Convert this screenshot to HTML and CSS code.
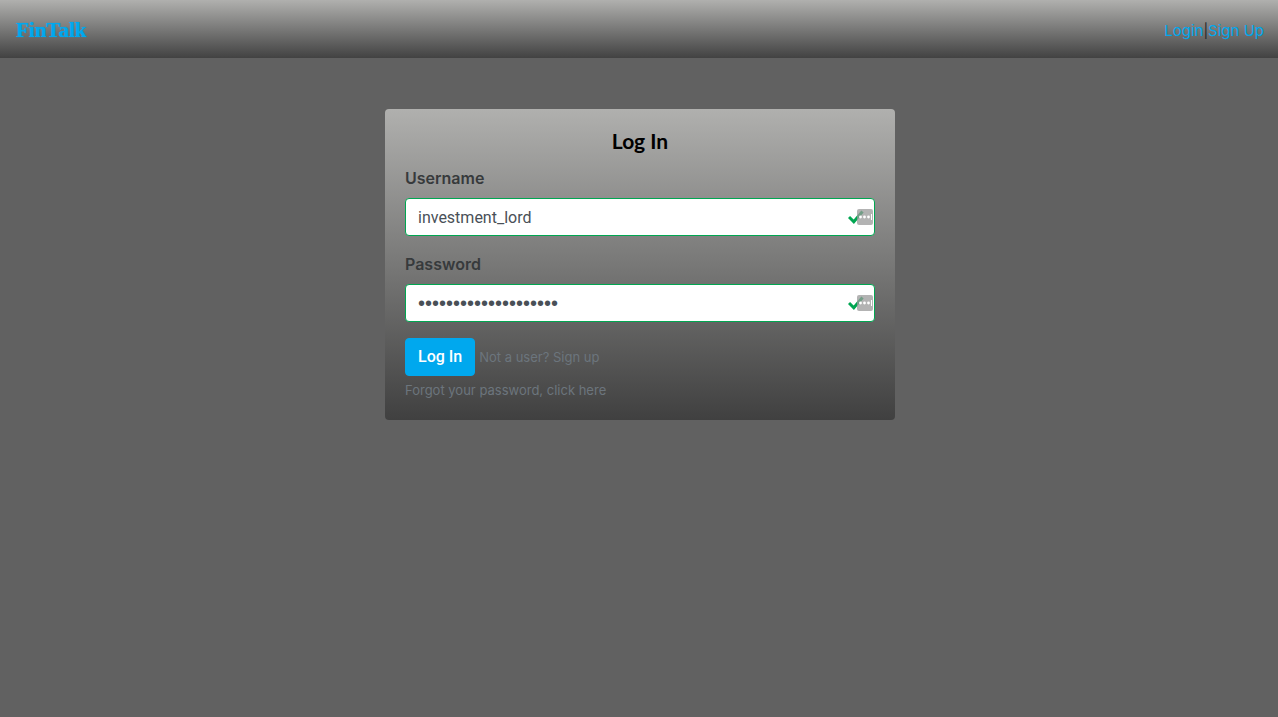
FILE: index.html
```html
<!DOCTYPE html>
<html lang="en">
<head>
<meta charset="utf-8">
<title>FinTalk</title>
<link rel="stylesheet" href="styles.css">
</head>
<body>
<header class="navbar">
  <a class="brand" href="#">FinTalk</a>
  <nav class="links"><a href="#">Login</a><span class="divider">|</span><a href="#">Sign Up</a></nav>
</header>
<main class="page">
  <form class="card">
    <h1 class="title">Log In</h1>
    <div class="group">
      <label for="username">Username</label>
      <div class="field">
        <input id="username" type="text" value="investment_lord">
        <svg class="status" viewBox="0 0 26 18" width="26" height="18" aria-hidden="true">
          <path d="M1 9l4.800 4.800 8.700-10.300" fill="none" stroke="#00a651" stroke-width="3"/>
          <rect x="9" y="1" width="16" height="16" rx="2" fill="#999" fill-opacity=".75"/>
          <g fill="#fff"><circle cx="12.500" cy="9" r="1.400"/><circle cx="16.500" cy="9" r="1.400"/><circle cx="20.500" cy="9" r="1.400"/><path d="M23 6h1v6h-1z"/></g>
        </svg>
      </div>
    </div>
    <div class="group">
      <label for="password">Password</label>
      <div class="field">
        <input id="password" class="secret" type="password" value="investmentlord123456">
        <svg class="status" viewBox="0 0 26 18" width="26" height="18" aria-hidden="true">
          <path d="M1 9l4.800 4.800 8.700-10.300" fill="none" stroke="#00a651" stroke-width="3"/>
          <rect x="9" y="1" width="16" height="16" rx="2" fill="#999" fill-opacity=".75"/>
          <g fill="#fff"><circle cx="12.500" cy="9" r="1.400"/><circle cx="16.500" cy="9" r="1.400"/><circle cx="20.500" cy="9" r="1.400"/><path d="M23 6h1v6h-1z"/></g>
        </svg>
      </div>
    </div>
    <div class="actions">
      <button class="submit" type="button">Log In</button>
      <a class="hint" href="#">Not a user? Sign up</a>
    </div>
    <a class="hint forgot" href="#">Forgot your password, click here</a>
  </form>
</main>
</body>
</html>
```
FILE: styles.css
```css
* { box-sizing: border-box; }
body {
  margin: 0;
  background: #616161;
  color: #373a3c;
  font: 16px/24px Roboto, sans-serif;
}
a { color: #00a8ee; text-decoration: none; }
.navbar {
  display: flex;
  align-items: center;
  justify-content: space-between;
  height: 58px;
  padding: 2px 14px 0 16px;
  background: linear-gradient(#b0b0ae, #424242);
}
.brand {
  font: bold 21px/28px "Liberation Serif", serif;
  text-shadow: 0 0 1px #00a8ee;
}
.links {
  padding-top: 2px;
  color: #212529;
  font: 15px/24px Inter, sans-serif;
}
.divider { font-size: 14px; }
.page { padding: 51px 16px 51px 18px; }
.card {
  max-width: 510px;
  margin: 0 auto;
  padding: 20px 20px 18px;
  border-radius: 4px;
  background: linear-gradient(#b0b0ae, #404040);
}
.title {
  margin: 0 0 13px;
  color: #000;
  text-align: center;
  font: bold 21px/24px Lato, sans-serif;
}
.group { margin-bottom: 16px; }
.group label {
  display: block;
  margin-bottom: 8px;
  font: 600 16px/24px Inter, sans-serif;
}
.field { position: relative; }
.field input {
  display: block;
  width: 100%;
  height: 38px;
  padding: 6px 36px 6px 12px;
  border: 1px solid #00a651;
  border-radius: 4px;
  background: #fff;
  color: #495057;
  font: 16px/24px Roboto, sans-serif;
}
.field .secret { font: 20px/24px "Liberation Sans", Arial, sans-serif; }
.status { position: absolute; top: 10px; right: 1px; }
.actions { display: flex; align-items: center; gap: 4px; }
.submit {
  height: 38px;
  padding: 6px 12px;
  border: 1px solid #00a8ee;
  border-radius: 4px;
  background: #00a8ee;
  color: #fff;
  font: 500 16px/24px Roboto, sans-serif;
}
.hint { color: #6c757d; font: 13px/24px Inter, sans-serif; }
.forgot { display: block; margin-top: 2px; }
```
